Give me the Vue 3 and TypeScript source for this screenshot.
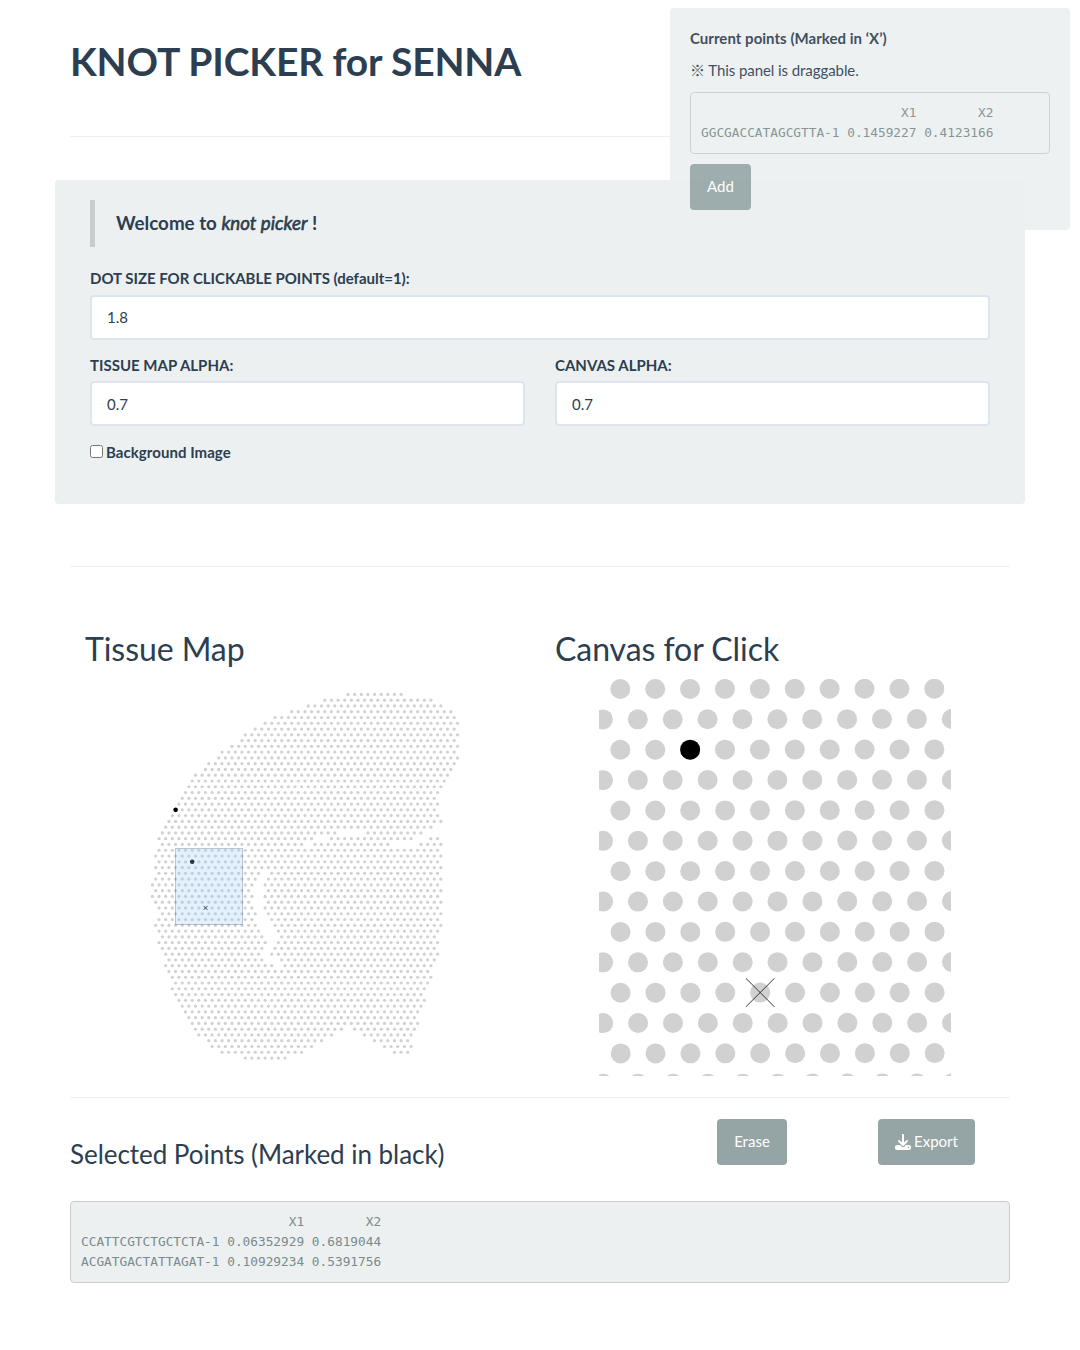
<script setup lang="ts">
import { ref } from 'vue'

interface Dot {
  x: number
  y: number
}

const dotSize = ref('1.8')
const tissueAlpha = ref('0.7')
const canvasAlpha = ref('0.7')
const background = ref(false)

const currentPoints = [
  '                          X1        X2',
  'GGCGACCATAGCGTTA-1 0.1459227 0.4123166',
].join('\n')

const selectedPoints = [
  '                           X1        X2',
  'CCATTCGTCTGCTCTA-1 0.06352929 0.6819044',
  'ACGATGACTATTAGAT-1 0.10929234 0.5391756',
].join('\n')

// Each row lists pairs of first/last lattice column occupied by tissue.
const tissueRows: number[][] = [
  [52, 68], [45, 77], [40, 80], [35, 83], [30, 84], [27, 85], [24, 84], [21, 85],
  [20, 84], [17, 85], [14, 84], [13, 85], [10, 84], [9, 83], [6, 82], [5, 81],
  [4, 80], [3, 79], [2, 78], [1, 79], [2, 78], [-1, 79], [-2, 80], [-3, 77],
  [-4, 48, 58, 74], [-5, 41, 47, 71, 77, 79], [-4, 38, 42, 64, 74, 80], [-5, 79],
  [-6, 80], [-5, 79], [-6, 80], [-5, 25, 29, 79], [-6, 24, 28, 80], [-7, 23, 27, 79],
  [-6, 22, 28, 80], [-7, 23, 27, 79], [-6, 22, 28, 80], [-5, 23, 27, 79],
  [-4, 24, 28, 80], [-5, 23, 29, 79], [-6, 24, 30, 80], [-5, 25, 31, 79],
  [-4, 26, 32, 78], [-5, 27, 31, 79], [-4, 26, 30, 78], [-3, 25, 29, 79],
  [-2, 26, 32, 78], [-3, 29, 33, 77], [-2, 76], [-1, 77], [0, 76], [-1, 75],
  [0, 74], [1, 75], [2, 74], [3, 73], [4, 72], [5, 73], [6, 50, 54, 72],
  [7, 47, 57, 71], [10, 44, 60, 70], [11, 41, 63, 71], [14, 38, 66, 70], [21, 33],
]

const mapX = (c: number): number => 90.6 + c * 3.316
const mapY = (r: number): number => 15.4 + r * 5.772

const tissueDots: Dot[] = []
tissueRows.forEach((row, r) => {
  for (let s = 0; s < row.length; s += 2) {
    for (let c = row[s]; c <= row[s + 1]; c += 2) tissueDots.push({ x: mapX(c), y: mapY(r) })
  }
})

const spot = (i: number, j: number): Dot => ({
  x: 21.3 + i * 34.89 + j * 0.03,
  y: 10 + j * 30.37 - i * 0.035,
})

const canvasDots: Dot[] = []
for (let j = 0; j < 14; j++) {
  const shift = j % 2 ? -0.5 : 0
  const count = j % 2 ? 11 : 10
  for (let i = 0; i < count; i++) canvasDots.push(spot(i + shift, j))
}
const picked = spot(2, 2)
const marked = spot(4, 10)
</script>

<template>
  <div class="page">
    <div class="container">
      <header class="header"><h1>KNOT PICKER for SENNA</h1></header>
      <hr />
      <section class="well">
        <blockquote>Welcome to <em>knot picker</em> !</blockquote>
        <div class="group first">
          <label for="dot">DOT SIZE FOR CLICKABLE POINTS (default=1):</label>
          <input id="dot" v-model="dotSize" class="field" type="text" />
        </div>
        <div class="pair">
          <div class="group">
            <label for="tissue">TISSUE MAP ALPHA:</label>
            <input id="tissue" v-model="tissueAlpha" class="field" type="text" />
          </div>
          <div class="group">
            <label for="canvas">CANVAS ALPHA:</label>
            <input id="canvas" v-model="canvasAlpha" class="field" type="text" />
          </div>
        </div>
        <label class="check"><input v-model="background" type="checkbox" /><span>Background Image</span></label>
      </section>
      <hr />
      <section class="plots">
        <div class="plot">
          <h2>Tissue Map</h2>
          <svg class="map" width="440" height="397" viewBox="0 0 440 397">
            <circle v-for="(d, k) in tissueDots" :key="k" :cx="d.x" :cy="d.y" r="1.6" fill="#d1d1d1" />
            <circle :cx="mapX(0)" :cy="mapY(20)" r="2.3" />
            <circle :cx="mapX(5)" :cy="mapY(29)" r="2.3" />
            <path d="M118.6 226.9l4 4m0-4l-4 4" stroke="#111" stroke-width=".9" />
            <rect x="90.5" y="169.5" width="67" height="76" fill="#9cf" stroke="#036" opacity=".27" />
          </svg>
        </div>
        <div class="plot">
          <h2>Canvas for Click</h2>
          <svg class="canvas" width="352.6" height="397" viewBox="0 0 352.6 397">
            <circle v-for="(d, k) in canvasDots" :key="k" :cx="d.x" :cy="d.y" r="10" fill="#d1d1d1" />
            <circle :cx="picked.x" :cy="picked.y" r="10" />
            <g :transform="`translate(${marked.x} ${marked.y})`">
              <path d="M-14.3-14.3l28.6 28.6m0-28.6l-28.6 28.6" stroke="#333" stroke-width="1" />
            </g>
          </svg>
        </div>
      </section>
      <hr />
      <section class="selected">
        <h3>Selected Points (Marked in black)</h3>
        <button class="btn erase">Erase</button>
        <button class="btn export">
          <svg width="16" height="16" viewBox="0 0 512 512" fill="currentColor">
            <path d="M288 32c0-17.700-14.300-32-32-32s-32 14.300-32 32v242.700l-73.400-73.400c-12.500-12.500-32.800-12.500-45.300 0s-12.500 32.800 0 45.300l128 128c12.500 12.500 32.800 12.500 45.300 0l128-128c12.500-12.500 12.500-32.800 0-45.300s-32.800-12.500-45.300 0L288 274.700V32zM64 352c-35.300 0-64 28.700-64 64v32c0 35.300 28.700 64 64 64h384c35.300 0 64-28.700 64-64v-32c0-35.300-28.700-64-64-64H346.500l-45.300 45.300c-25 25-65.500 25-90.500 0L165.500 352H64zm368 56a24 24 0 1 1 0 48 24 24 0 1 1 0-48z" />
          </svg>
          <span>Export</span>
        </button>
      </section>
      <pre class="output">{{ selectedPoints }}</pre>
    </div>

    <aside class="panel">
      <strong>Current points (Marked in ‘X’)</strong>
      <p>※ This panel is draggable.</p>
      <pre>{{ currentPoints }}</pre>
      <button class="btn">Add</button>
    </aside>
  </div>
</template>

<style>
body {
  background: #fff;
}
</style>

<style scoped>
* {
  box-sizing: border-box;
}
.page {
  position: relative;
  height: 1350px;
  overflow: hidden;
  font: 15px/1.42857 Lato, "Noto Sans CJK JP", sans-serif;
  color: #2c3e50;
}
.container {
  width: 940px;
  margin: 0 auto;
}
h1, h2, h3, p {
  margin: 0;
}
hr {
  height: 1px;
  margin: 0;
  border: 0;
  background: #ecf0f1;
}
.header {
  height: 136px;
  padding-top: 40px;
}
h1 {
  font-size: 39px;
  line-height: 43px;
  font-weight: 700;
  letter-spacing: -0.15px;
}
.well {
  height: 324px;
  margin: 43px -15px 62px;
  padding: 20px 35px;
  background: #ecf0f1;
  border-radius: 4px;
}
blockquote {
  height: 47px;
  margin: 0 0 21px;
  padding: 9px 21px;
  border-left: 5px solid #c9cccd;
  font-size: 18.75px;
  line-height: 27px;
  font-weight: 700;
}
blockquote em {
  font-weight: 400;
  -webkit-text-stroke: 0.6px currentColor;
}
.group {
  flex: 1;
  margin-bottom: 15px;
}
.group label {
  display: block;
  height: 21px;
  margin-bottom: 5px;
  line-height: 21px;
  font-weight: 700;
}
.first label {
  height: 22px;
  letter-spacing: -0.02px;
}
.field {
  display: block;
  width: 100%;
  height: 45px;
  padding: 10px 15px;
  border: 2px solid #dce4ec;
  border-radius: 4px;
  background: #fff;
  color: #2c3e50;
  font: inherit;
}
.first .field {
  padding: 9px 15px 11px;
}
.pair {
  display: flex;
  gap: 30px;
}
.check {
  display: flex;
  align-items: center;
  gap: 3px;
  height: 23px;
  font-weight: 700;
  letter-spacing: 0.05px;
}
.check input {
  width: 13px;
  height: 13px;
  margin: 0 0 2px;
}
.plots {
  display: flex;
  height: 530px;
  padding: 61px 15px 0;
}
.plot {
  flex: none;
  width: 470px;
}
h2 {
  height: 51px;
  font-size: 32px;
  line-height: 42px;
  font-weight: 400;
  letter-spacing: -0.06px;
}
.plot svg {
  display: block;
}
.plot .canvas {
  margin-left: 43.6px;
}
.plot + .plot {
  width: 440px;
}
.selected {
  display: flex;
  height: 103px;
  padding-top: 21px;
}
h3 {
  width: 647px;
  padding-top: 21px;
  font-size: 26px;
  line-height: 29px;
  font-weight: 400;
  letter-spacing: -0.04px;
}
.btn {
  display: flex;
  align-items: center;
  justify-content: center;
  height: 46px;
  padding: 0 17px;
  border: 0;
  border-radius: 4px;
  background: #95a5a6;
  color: #fff;
  font: inherit;
}
.erase {
  width: 70px;
}
.export {
  width: 97px;
  margin-left: 91px;
  padding: 0;
  gap: 3px;
}
pre {
  margin: 0;
  padding: 10px;
  border: 1px solid #ccc;
  border-radius: 4px;
  background: #ecf0f1;
  color: #7b8a8b;
  font: 12.79px/20px "DejaVu Sans Mono", monospace;
}
.output {
  height: 82px;
}
.panel {
  position: absolute;
  top: 8px;
  left: 670px;
  width: 400px;
  height: 222px;
  padding: 20px;
  border-radius: 4px;
  background: #ecf0f1;
  opacity: 0.9;
}
.panel strong {
  display: block;
  line-height: 21px;
  letter-spacing: 0.03px;
}
.panel p {
  margin: 11px 0;
  line-height: 21px;
  letter-spacing: -0.07px;
}
.panel pre {
  height: 62px;
  margin-bottom: 10px;
}
</style>
